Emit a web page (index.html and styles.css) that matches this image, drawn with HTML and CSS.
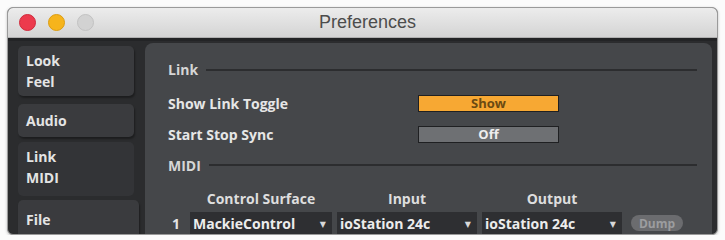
FILE: index.html
```html
<!DOCTYPE html>
<html>
<head>
<meta charset="utf-8">
<link rel="stylesheet" href="styles.css">
</head>
<body>
<div class="window">
  <div class="titlebar">
    <div class="lights">
      <span class="light red"></span>
      <span class="light yellow"></span>
      <span class="light grey"></span>
    </div>
    <div class="title">Preferences</div>
  </div>
  <div class="body">
    <div class="sidebar">
      <div class="tab tab-look"><div>Look</div><div>Feel</div></div>
      <div class="tab tab-audio"><div>Audio</div></div>
      <div class="tab tab-link selected"><div>Link</div><div>MIDI</div></div>
      <div class="tab tab-file"><div>File</div><div>Folder</div></div>
    </div>
    <div class="panel">
      <div class="section-head h-link"><span>Link</span><span class="rule"></span></div>
      <div class="setting s-show">
        <span class="label">Show Link Toggle</span>
        <span class="btn btn-on">Show</span>
      </div>
      <div class="setting s-sync">
        <span class="label">Start Stop Sync</span>
        <span class="btn btn-off">Off</span>
      </div>
      <div class="section-head h-midi"><span>MIDI</span><span class="rule"></span></div>
      <div class="midi-grid">
        <span></span>
        <span class="colhead">Control Surface</span>
        <span class="colhead">Input</span>
        <span class="colhead">Output</span>
        <span></span>
        <span class="num">1</span>
        <span class="dropdown"><span>MackieControl</span><span class="arrow">&#9660;</span></span>
        <span class="dropdown"><span>ioStation 24c</span><span class="arrow">&#9660;</span></span>
        <span class="dropdown"><span>ioStation 24c</span><span class="arrow">&#9660;</span></span>
        <span class="dump">Dump</span>
      </div>
    </div>
  </div>
</div>
</body>
</html>
```
FILE: styles.css
```css
* { box-sizing: border-box; }
html, body { margin: 0; padding: 0; background: #fbfbfb; }
body {
  padding: 7px 7px 0 7px;
  font-family: "Open Sans", "DejaVu Sans", sans-serif;
  font-weight: 700;
  font-size: 14px;
  color: #e4e4e4;
}
.window {
  width: 711px;
  height: 228px;
  border-radius: 6px;
  overflow: hidden;
  background: #2b2c2e;
  border: 1px solid #9a9a9a;
  display: flex;
  flex-direction: column;
  box-shadow: 0 1px 3px rgba(0,0,0,0.25);
}
.titlebar {
  height: 30px;
  flex: none;
  display: flex;
  align-items: center;
  background: linear-gradient(#ececec, #d4d4d4);
  border-bottom: 1px solid #b0b0b0;
}
.lights { display: flex; gap: 12px; padding-left: 11px; }
.light { width: 17px; height: 17px; border-radius: 50%; display: block; }
.red { background: #ec3a4d; border: 1px solid #d02a3c; }
.yellow { background: #f6b41c; border: 1px solid #dc9d12; }
.grey { background: #d2d2d2; border: 1px solid #c2c2c2; }
.title {
  flex: 1;
  text-align: center;
  font-family: "Liberation Sans", Arial, sans-serif;
  font-weight: 400;
  font-size: 18px;
  color: #4c4c4c;
  padding-right: 76px;
}
.body {
  flex: 1;
  display: flex;
  gap: 11px;
  padding: 2px 5px 0 10px;
  border-top: 3px solid #232426;
  min-height: 0;
}
.sidebar {
  width: 116px;
  flex: none;
  padding-top: 3px;
  display: flex;
  flex-direction: column;
}
.tab {
  flex: none;
  border-radius: 5px;
  background: #3a3b3e;
  box-shadow: 1px 2px 2px rgba(0,0,0,0.35);
  padding-left: 8px;
  line-height: 21px;
}
.tab-look { height: 50px; padding-top: 4px; }
.tab-audio { height: 33px; margin-top: 8px; padding-top: 6px; }
.tab-link { height: 54px; margin-top: 5px; padding-top: 4px; background: #333437; box-shadow: none; }
.tab-file { height: 60px; margin-top: 4px; padding-top: 9px; width: 121px; }
.panel {
  flex: 1;
  background: #45474a;
  border-radius: 8px 8px 0 0;
  padding: 12px 15px 0 23px;
  display: flex;
  flex-direction: column;
}
.section-head {
  flex: none;
  display: flex;
  align-items: center;
  gap: 8px;
  color: #d6d6d6;
}
.section-head .rule { flex: 1; height: 2px; background: #2c2d2f; }
.h-link { height: 29px; }
.h-midi { height: 38px; }
.setting { flex: none; display: flex; align-items: center; }
.s-show { height: 38px; }
.s-sync { height: 24px; }
.label { width: 250px; color: #e6e6e6; }
.btn {
  width: 141px;
  height: 17px;
  display: flex;
  align-items: center;
  justify-content: center;
  border: 1px solid #1f2022;
  font-size: 13px;
}
.btn-on { background: #f7a833; color: #6a4a12; }
.btn-off { background: #6e7073; color: #eeeeee; }
.midi-grid {
  flex: none;
  display: grid;
  grid-template-columns: 17px 142px 140px 140px 52px;
  grid-template-rows: 28px 22px;
  column-gap: 5px;
  align-items: center;
}
.colhead { text-align: center; color: #dedede; }
.num { padding-left: 4px; }
.dropdown {
  height: 22px;
  background: #2e2f32;
  display: flex;
  align-items: center;
  justify-content: space-between;
  padding: 0 6px 0 3px;
  color: #ececec;
}
.arrow { font-size: 8px; color: #d8d8d8; }
.dump {
  margin-left: 4px;
  height: 16px;
  width: 52px;
  border-radius: 8px;
  background: #6b6c6f;
  color: #9c9d9f;
  font-size: 12px;
  display: flex;
  align-items: center;
  justify-content: center;
}
```
